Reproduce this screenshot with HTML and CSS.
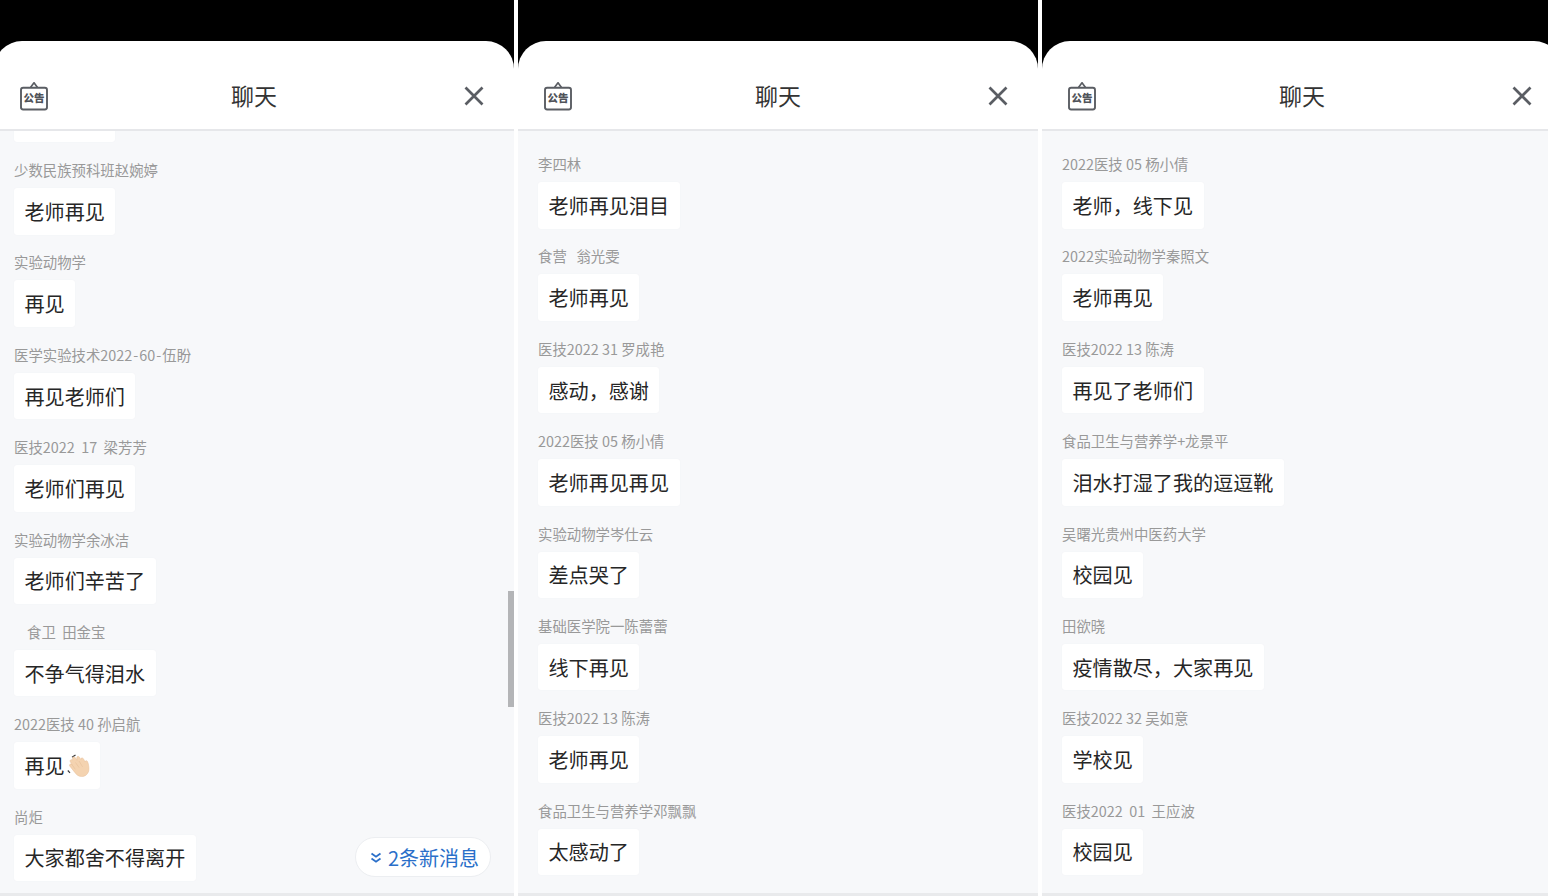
FILE: index.html
```html
<!DOCTYPE html>
<html lang="zh-CN">
<head>
<meta charset="utf-8">
<title>聊天</title>
<link rel="stylesheet" href="styles.css">
</head>
<body>
<main class="screens">

  <section class="screen">
    <div class="notch"></div>
    <div class="sheet">
      <header class="bar">
        <div class="notice-icon">
          <svg class="notice-frame" viewBox="0 0 30 30" aria-hidden="true"><path d="M11.500 6.500 15 1.800 18.500 6.500" fill="none" stroke="#5a5d63" stroke-width="1.700" stroke-linejoin="round"/><rect x="2" y="6.800" width="26" height="21.700" rx="2.200" fill="none" stroke="#5a5d63" stroke-width="1.900"/></svg>
          <span class="notice-text">公告</span>
        </div>
        <h1 class="title">聊天</h1>
        <svg class="close-icon" viewBox="0 0 20 20" aria-hidden="true"><path d="M1.500 1.500 18.500 18.500M18.500 1.500 1.500 18.500" fill="none" stroke="#5a5d63" stroke-width="2.700"/></svg>
      </header>
      <div class="feed">
        <div class="list list-a">
          <div class="msg msg-cut"><div class="bubble"></div></div>
          <div class="msg"><div class="name">少数民族预科班赵婉婷</div><div class="bubble">老师再见</div></div>
          <div class="msg"><div class="name">实验动物学</div><div class="bubble">再见</div></div>
          <div class="msg"><div class="name">医学实验技术2022<span class="dash">-</span>60<span class="dash">-</span>伍盼</div><div class="bubble">再见老师们</div></div>
          <div class="msg"><div class="name">医技2022&nbsp;&nbsp;17&nbsp;&nbsp;梁芳芳</div><div class="bubble">老师们再见</div></div>
          <div class="msg"><div class="name">实验动物学余冰洁</div><div class="bubble">老师们辛苦了</div></div>
          <div class="msg"><div class="name name-indent">食卫&nbsp;&nbsp;田金宝</div><div class="bubble">不争气得泪水</div></div>
          <div class="msg"><div class="name">2022医技 40 孙启航</div><div class="bubble">再见<svg class="wave" viewBox="0 0 24 24" aria-hidden="true"><path d="M6 3.200 9.500 1M1.800 16.500l2.200 2.300" fill="none" stroke="#3a3a3a" stroke-width="1.200"/><path d="M6.800 3.300c1-.8 2.200-.3 2.800.7l1.400 2.300-.2-2.500c-.1-1.400 1.700-2 2.500-.8l1.500 2.400c-.1-1.400 1.800-2 2.600-.7l1.800 3.300c-.3-1.300 1.400-1.900 2.100-.8 1.200 2.300 1.700 5.300 1.600 8.200-.2 4.200-3.500 7.400-7.500 7.100-3.300-.2-5-2-6.600-4.100L3.700 12c-.9-1.300.9-2.800 2.100-1.700L4.200 7.600C3.500 6.200 5.300 5 6.400 6z" fill="#f4d3b0" stroke="#e6bf98" stroke-width=".5"/><path d="M9.500 8.500l3.500 5M13 7l3.600 5.800M5.500 10l3.800 5.300" fill="none" stroke="#e6bf98" stroke-width=".6"/></svg></div></div>
          <div class="msg"><div class="name">尚炬</div><div class="bubble">大家都舍不得离开</div></div>
        </div>
        <div class="scrollbar"></div>
        <div class="new-pill"><svg class="chevrons" viewBox="0 0 12 12" aria-hidden="true"><path d="M1.500 1.500 6 4.700 10.500 1.500M1.500 6.500 6 9.700 10.500 6.500" fill="none" stroke="#2a6fc9" stroke-width="1.800"/></svg>2条新消息</div>
      </div>
    </div>
  </section>

  <section class="screen">
    <div class="notch"></div>
    <div class="sheet">
      <header class="bar">
        <div class="notice-icon">
          <svg class="notice-frame" viewBox="0 0 30 30" aria-hidden="true"><path d="M11.500 6.500 15 1.800 18.500 6.500" fill="none" stroke="#5a5d63" stroke-width="1.700" stroke-linejoin="round"/><rect x="2" y="6.800" width="26" height="21.700" rx="2.200" fill="none" stroke="#5a5d63" stroke-width="1.900"/></svg>
          <span class="notice-text">公告</span>
        </div>
        <h1 class="title">聊天</h1>
        <svg class="close-icon" viewBox="0 0 20 20" aria-hidden="true"><path d="M1.500 1.500 18.500 18.500M18.500 1.500 1.500 18.500" fill="none" stroke="#5a5d63" stroke-width="2.700"/></svg>
      </header>
      <div class="feed">
        <div class="list">
          <div class="msg"><div class="name">李四林</div><div class="bubble">老师再见泪目</div></div>
          <div class="msg"><div class="name">食营&nbsp;&nbsp;&nbsp;翁光雯</div><div class="bubble">老师再见</div></div>
          <div class="msg"><div class="name">医技2022 31 罗成艳</div><div class="bubble">感动，感谢</div></div>
          <div class="msg"><div class="name">2022医技 05 杨小倩</div><div class="bubble">老师再见再见</div></div>
          <div class="msg"><div class="name">实验动物学岑仕云</div><div class="bubble">差点哭了</div></div>
          <div class="msg"><div class="name">基础医学院一陈蕾蕾</div><div class="bubble">线下再见</div></div>
          <div class="msg"><div class="name">医技2022 13 陈涛</div><div class="bubble">老师再见</div></div>
          <div class="msg"><div class="name">食品卫生与营养学邓飘飘</div><div class="bubble">太感动了</div></div>
        </div>
      </div>
    </div>
  </section>

  <section class="screen">
    <div class="notch"></div>
    <div class="sheet">
      <header class="bar">
        <div class="notice-icon">
          <svg class="notice-frame" viewBox="0 0 30 30" aria-hidden="true"><path d="M11.500 6.500 15 1.800 18.500 6.500" fill="none" stroke="#5a5d63" stroke-width="1.700" stroke-linejoin="round"/><rect x="2" y="6.800" width="26" height="21.700" rx="2.200" fill="none" stroke="#5a5d63" stroke-width="1.900"/></svg>
          <span class="notice-text">公告</span>
        </div>
        <h1 class="title">聊天</h1>
        <svg class="close-icon" viewBox="0 0 20 20" aria-hidden="true"><path d="M1.500 1.500 18.500 18.500M18.500 1.500 1.500 18.500" fill="none" stroke="#5a5d63" stroke-width="2.700"/></svg>
      </header>
      <div class="feed">
        <div class="list">
          <div class="msg"><div class="name">2022医技 05 杨小倩</div><div class="bubble">老师，线下见</div></div>
          <div class="msg"><div class="name">2022实验动物学秦照文</div><div class="bubble">老师再见</div></div>
          <div class="msg"><div class="name">医技2022 13 陈涛</div><div class="bubble">再见了老师们</div></div>
          <div class="msg"><div class="name">食品卫生与营养学+龙景平</div><div class="bubble">泪水打湿了我的逗逗靴</div></div>
          <div class="msg"><div class="name">吴曙光贵州中医药大学</div><div class="bubble">校园见</div></div>
          <div class="msg"><div class="name">田欲晓</div><div class="bubble">疫情散尽，大家再见</div></div>
          <div class="msg"><div class="name">医技2022 32 吴如意</div><div class="bubble">学校见</div></div>
          <div class="msg"><div class="name">医技2022&nbsp;&nbsp;01&nbsp;&nbsp;王应波</div><div class="bubble">校园见</div></div>
        </div>
      </div>
    </div>
  </section>

</main>
</body>
</html>
```

FILE: styles.css
```css
* { box-sizing: border-box; }
html, body { margin: 0; padding: 0; height: 100%; background: #fff; overflow: hidden; }
body { font-family: "Noto Sans CJK SC", "Noto Sans", sans-serif; }

.screens { display: flex; gap: 4px; height: 896px; margin-left: -6px; width: 1568px; }
.screen { flex: 0 0 520px; display: flex; flex-direction: column; background: #000; height: 896px; }
.notch { flex: 0 0 41px; background: #000; }
.sheet { flex: 1; display: flex; flex-direction: column; min-height: 0; background: #fff; border-radius: 28px 28px 0 0; overflow: hidden; }

.bar { flex: 0 0 90px; display: flex; align-items: center; justify-content: space-between; padding: 21px 30px 0 25px; border-bottom: 2px solid #e6e7ea; }
.notice-icon { position: relative; width: 30px; height: 30px; flex: none; }
.notice-frame { display: block; width: 30px; height: 30px; }
.notice-text { position: absolute; left: 0; right: 0; top: 9px; text-align: center; font-size: 10.500px; line-height: 15px; font-weight: 900; color: #50535a; white-space: nowrap; }
.close-icon { width: 20px; height: 20px; flex: none; }
.title { margin: 0 0 2px; flex: 1; text-align: center; font-size: 23px; font-weight: 400; line-height: 32px; color: #333; padding-right: 5px; }

.feed { flex: 1; min-height: 0; position: relative; background: #f7f8fa; overflow: hidden; border-bottom: 3px solid #e9eaec; }
.list { display: flex; flex-direction: column; align-items: flex-start; padding: 22px 0 0 20px; }
.list-a { padding-top: 0; }
.msg { flex: none; display: flex; flex-direction: column; align-items: flex-start; height: 92.4px; }
.msg-cut { height: 64px; margin-top: -36px; }
.msg-cut .bubble { width: 101px; flex: none; }
.name { font-size: 14.4px; line-height: 22px; height: 22px; color: #999; white-space: nowrap; margin-bottom: 7px; }
.name-indent { padding-left: 13px; }
.dash { padding: 0 1px; }
.bubble { display: flex; align-items: center; height: 46.500px; padding: 1px 10.500px 0; background: #fff; border-radius: 3px; box-shadow: 0 0 1px #eceef0; font-size: 20.100px; line-height: 28px; color: #262626; white-space: nowrap; }
.wave { width: 24px; height: 24px; margin-left: 1px; }

.scrollbar { position: absolute; right: 0; top: 460px; width: 6px; height: 116px; background: #b4b5b7; }
.new-pill { position: absolute; left: 361px; bottom: 16px; height: 40px; width: 136px; border-radius: 20px; background: #fff; border: 1px solid #eceef1; color: #2a6fc9; font-size: 20px; line-height: 38px; display: flex; align-items: center; gap: 6px; padding: 2px 0 0 14px; white-space: nowrap; }
.chevrons { width: 12px; height: 12px; margin-top: -1px; }
```
